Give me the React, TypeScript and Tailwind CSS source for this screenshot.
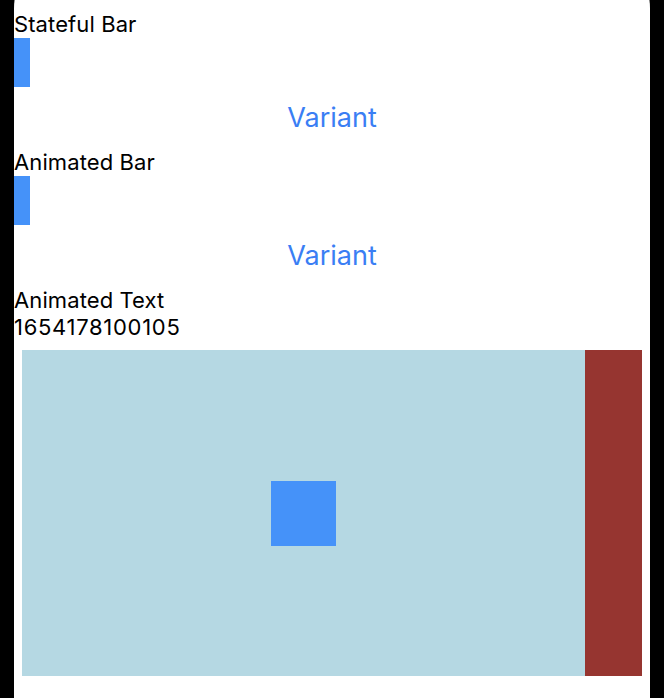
export default function App() {
  return (
    <div className="h-[698px] w-[664px] overflow-hidden bg-black" style={{ fontFamily: "Inter, 'Noto Sans', sans-serif" }}>
      <div className="ml-[14px] -mt-[48px] h-[780px] w-[636px] rounded-t-[56px] bg-white pt-[59px] text-black">
        <p className="text-[22px] leading-[27px] tracking-[0.1px]">Stateful Bar</p>
        <div className="h-[49px] w-[16px] bg-[#4592f9]" />
        <div className="flex h-[62px] items-center justify-center">
          <button className="text-[27px] leading-[32px] text-[#3a7ef4]">Variant</button>
        </div>
        <p className="text-[22px] leading-[27px] tracking-[0.1px]">Animated Bar</p>
        <div className="h-[49px] w-[16px] bg-[#4592f9]" />
        <div className="flex h-[62px] items-center justify-center">
          <button className="text-[27px] leading-[32px] text-[#3a7ef4]">Variant</button>
        </div>
        <p className="text-[22px] leading-[27px] tracking-[0.1px]">Animated Text</p>
        <p className="text-[22px] leading-[27px] tracking-[0.7px]">1654178100105</p>
        <div className="ml-[8px] mt-[9px] flex h-[326px] w-[620px]">
          <div className="flex flex-1 items-center justify-center bg-[#b5d8e3]">
            <div className="h-[65px] w-[65px] bg-[#4592f9]" />
          </div>
          <div className="w-[57px] bg-[#963530]" />
        </div>
      </div>
    </div>
  );
}
